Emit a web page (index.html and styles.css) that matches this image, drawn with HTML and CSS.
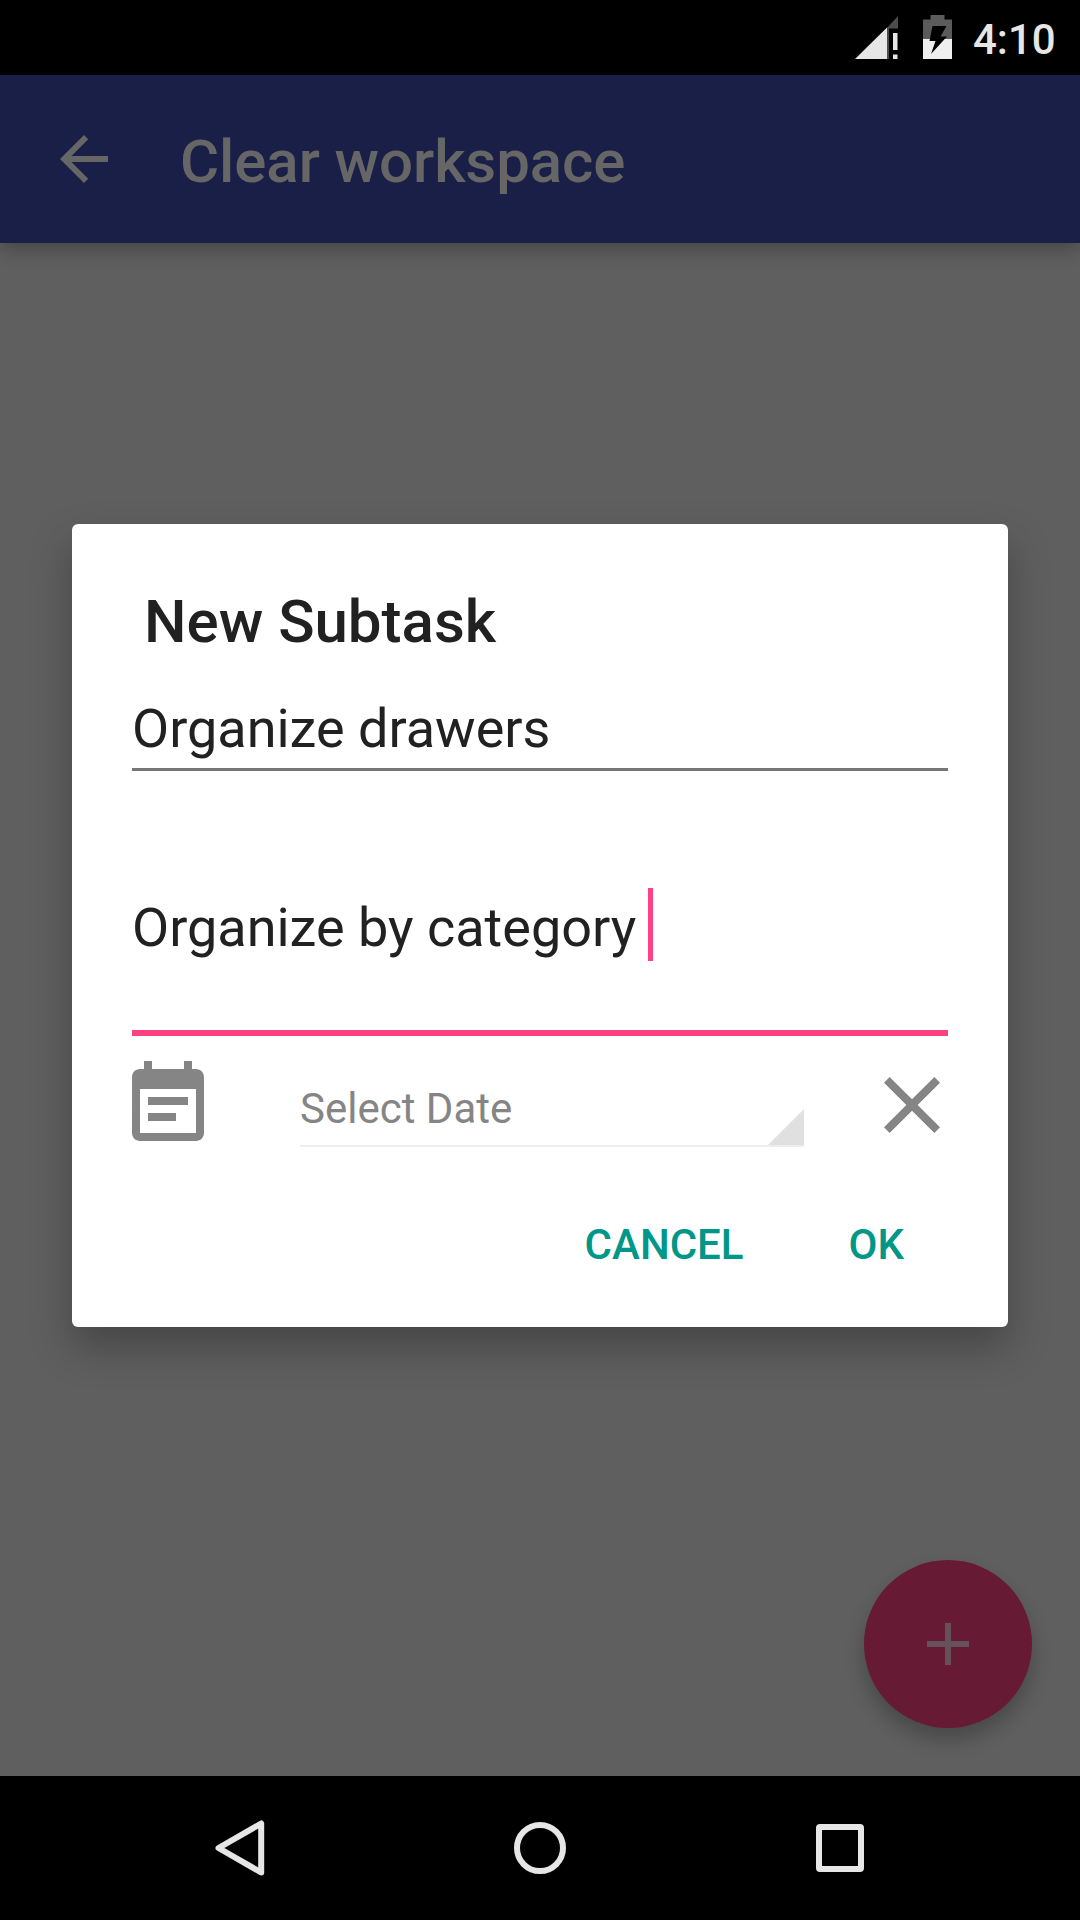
FILE: index.html
```html
<!DOCTYPE html>
<html lang="en">
<head>
<meta charset="utf-8">
<title>Clear workspace</title>
<link rel="stylesheet" href="styles.css">
</head>
<body>
<div class="screen">
  <header class="status-bar">
    <svg class="signal-icon" width="43" height="43" viewBox="0 0 43 43">
      <path fill="#4c4c4c" d="M43 0V12.500H31.500Z"/>
      <path fill="#e6e6e6" d="M0 43 32 11.500V43Z"/>
      <path fill="#4c4c4c" d="M32 11.500H34V43H32Z"/>
      <path fill="#e6e6e6" d="M38 17H42.500V34H38ZM38 38.500H42.500V43H38Z"/>
    </svg>
    <svg class="battery-icon" width="29" height="44" viewBox="0 0 29 44">
      <path fill="#5b5b5b" d="M7.500 0H21.500V4.500H29V24H0V4.500H7.500Z"/>
      <path fill="#efefef" d="M0 24H29V44H0Z"/>
      <path fill="#000" d="M9.500 11H23.500L17.500 21.500H24L8 39 12.500 26H6.500Z"/>
    </svg>
    <span class="clock">4:10</span>
  </header>
  <div class="app-bar">
    <svg class="back-icon" width="72" height="72" viewBox="0 0 24 24">
      <path fill="currentColor" d="M20 11H7.830l5.590-5.590L12 4l-8 8 8 8 1.410-1.410L7.830 13H20v-2z"/>
    </svg>
    <h1 class="app-title">Clear workspace</h1>
  </div>
  <main class="content">
    <button class="fab" aria-label="Add">
      <svg width="72" height="72" viewBox="0 0 24 24">
        <path fill="currentColor" d="M19 13h-6v6h-2v-6H5v-2h6V5h2v6h6v2z"/>
      </svg>
    </button>
  </main>
  <nav class="nav-bar">
    <svg width="60" height="60" viewBox="0 0 60 60">
      <path d="M51.200 5.500V54.500L8.500 30Z"/>
    </svg>
    <svg width="60" height="60" viewBox="0 0 60 60">
      <circle cx="30" cy="30" r="23"/>
    </svg>
    <svg width="60" height="60" viewBox="0 0 60 60">
      <rect x="9" y="9" width="42" height="42" rx="1"/>
    </svg>
  </nav>
  <section class="dialog">
    <h2 class="dialog-title">New Subtask</h2>
    <div class="field field-name">Organize drawers</div>
    <div class="field field-notes"><span class="notes-text">Organize by category </span><i class="caret"></i></div>
    <div class="date-row">
      <svg width="96" height="96" viewBox="0 0 24 24">
        <path fill="currentColor" d="M17 10H7v2h10v-2zm2-7h-1V1h-2v2H8V1H6v2H5c-1.110 0-1.990.9-1.990 2L3 19c0 1.100.89 2 2 2h14c1.100 0 2-.9 2-2V5c0-1.100-.9-2-2-2zm0 16H5V8h14v11zm-5-5H7v2h7v-2z"/>
      </svg>
      <div class="date-select">
        <span>Select Date</span>
        <svg width="36" height="36" viewBox="0 0 36 36"><path fill="#e0e0e0" d="M36 0V36H0Z"/></svg>
      </div>
      <svg width="96" height="96" viewBox="0 0 24 24">
        <path fill="currentColor" d="M19 6.410L17.590 5 12 10.590 6.410 5 5 6.410 10.590 12 5 17.590 6.410 19 12 13.410 17.590 19 19 17.590 13.410 12z"/>
      </svg>
    </div>
    <div class="actions">
      <button class="action">CANCEL</button>
      <button class="action">OK</button>
    </div>
  </section>
</div>
</body>
</html>
```
FILE: styles.css
```css
* {
  box-sizing: border-box;
}

body {
  margin: 0;
  background: #000;
  font-family: Roboto, sans-serif;
}

svg {
  display: block;
  flex: none;
}

button {
  margin: 0;
  padding: 0;
  border: 0;
  background: none;
  font: inherit;
}

.screen {
  position: relative;
  display: flex;
  flex-direction: column;
  width: 1080px;
  height: 1920px;
  overflow: hidden;
}

.status-bar {
  display: flex;
  justify-content: flex-end;
  height: 75px;
  padding-right: 24px;
  background: #000;
  color: #e6e6e6;
}

.signal-icon {
  margin: 16px 25px 0 0;
}

.battery-icon {
  margin: 15px 21px 0 0;
}

.clock {
  width: 83px;
  font-size: 42px;
  font-weight: 500;
  line-height: 80px;
}

.app-bar {
  position: relative;
  z-index: 1;
  display: flex;
  align-items: center;
  gap: 60px;
  height: 168px;
  padding-left: 48px;
  background: #191f47;
  color: #666;
  box-shadow: 0 6px 18px rgba(0, 0, 0, 0.28);
}

.app-title {
  margin: 4px 0 0;
  font-size: 60px;
  font-weight: 500;
  letter-spacing: -0.08px;
}

.content {
  display: flex;
  flex: 1;
  align-items: flex-end;
  justify-content: flex-end;
  padding: 48px;
  background: #5f5f5f;
}

.fab {
  display: flex;
  align-items: center;
  justify-content: center;
  width: 168px;
  height: 168px;
  border-radius: 50%;
  background: #661a33;
  color: #665059;
  box-shadow: 0 12px 20px rgba(0, 0, 0, 0.24);
}

.nav-bar {
  display: flex;
  align-items: center;
  justify-content: center;
  gap: 240px;
  height: 144px;
  background: #000;
  fill: none;
  stroke: #e6e6e6;
  stroke-width: 6;
  stroke-linejoin: round;
}

.dialog {
  position: absolute;
  z-index: 2;
  top: 524px;
  left: 72px;
  display: flex;
  flex-direction: column;
  width: 936px;
  height: 803px;
  padding: 62px 60px 0;
  border-radius: 6px;
  background: #fff;
  color: #212121;
  box-shadow: 0 20px 42px rgba(0, 0, 0, 0.27);
}

.dialog-title {
  margin: 0 0 0 12px;
  font-size: 60px;
  font-weight: 500;
  line-height: 72px;
}

.field {
  font-size: 54px;
  line-height: 72px;
  white-space: pre;
}

.field-name {
  height: 113px;
  padding-top: 35px;
  border-bottom: 3px solid #757575;
}

.field-notes {
  display: flex;
  height: 265px;
  padding-top: 117px;
  border-bottom: 6px solid #ff4081;
}

.notes-text {
  margin: 4px -2px 0 0;
}

.caret {
  width: 5px;
  height: 73px;
  background: #ff4081;
}

.date-row {
  display: flex;
  align-items: flex-start;
  margin: 21px -12px 0;
  color: #858585;
}

.date-select {
  display: flex;
  align-items: flex-end;
  justify-content: space-between;
  width: 504px;
  height: 90px;
  margin: 0 60px 0 84px;
  border-bottom: 2px solid #eee;
  font-size: 42px;
  line-height: 72px;
}

.actions {
  display: flex;
  justify-content: flex-end;
  gap: 105px;
  margin-top: 67px;
  padding-right: 44px;
}

.action {
  color: #009688;
  font-size: 42px;
  font-weight: 500;
  line-height: 50px;
}
```
